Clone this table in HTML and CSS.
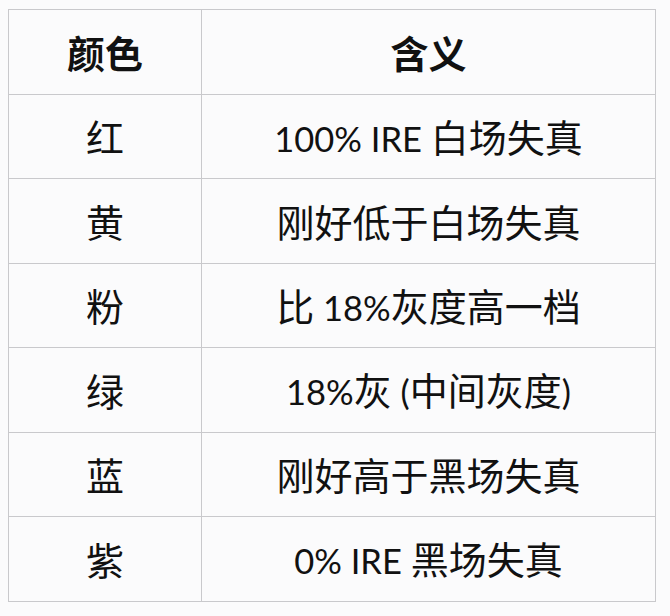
FILE: index.html
```html
<!DOCTYPE html>
<html lang="zh-CN">
<head>
<meta charset="utf-8">
<title>颜色 含义</title>
<link rel="stylesheet" href="styles.css">
</head>
<body>
<div class="page">
<table class="legend">
  <thead>
    <tr><th class="c1">颜色</th><th class="c2">含义</th></tr>
  </thead>
  <tbody>
    <tr><td>红</td><td><span class="lat">100% IRE </span>白场失真</td></tr>
    <tr><td>黄</td><td>刚好低于白场失真</td></tr>
    <tr><td>粉</td><td>比<span class="lat"> 18%</span>灰度高一档</td></tr>
    <tr><td>绿</td><td><span class="lat">18%</span>灰<span class="lat"> (</span>中间灰度<span class="lat">)</span></td></tr>
    <tr><td>蓝</td><td>刚好高于黑场失真</td></tr>
    <tr><td>紫</td><td><span class="lat">0% IRE </span>黑场失真</td></tr>
  </tbody>
</table>
</div>
</body>
</html>
```
FILE: styles.css
```css
html, body {
  margin: 0;
  padding: 0;
  background: #fbfbfc;
}
.page {
  padding: 9px 0 0 8px;
}
.legend {
  border-collapse: collapse;
  width: 648px;
  table-layout: fixed;
  font-family: "Noto Sans CJK SC", sans-serif;
  font-size: 38px;
  color: #111;
}
.legend th, .legend td {
  border: 1px solid #c9c9cc;
  text-align: center;
  vertical-align: middle;
  padding: 0;
  line-height: 1;
}
.legend tr {
  height: 84.5px;
}
.legend th {
  font-weight: 700;
}
.legend .c1 {
  width: 192px;
}
.lat {
  font-family: Lato, "Noto Sans CJK SC", sans-serif;
  font-size: 34.5px;
}
```
